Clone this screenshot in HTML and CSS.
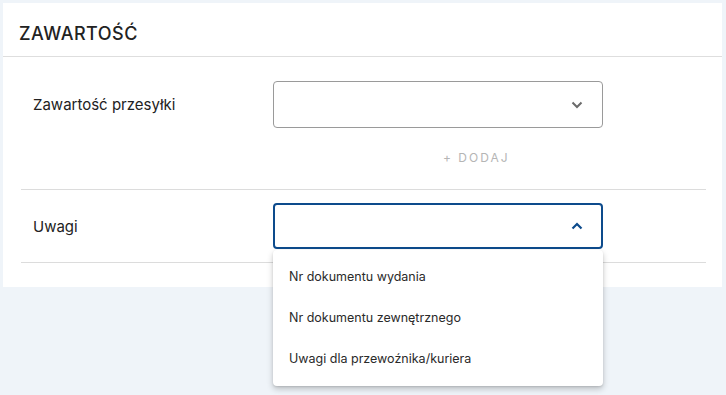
FILE: index.html
```html
<!DOCTYPE html>
<html lang="pl">
<head>
    <meta charset="UTF-8">
    <meta name="viewport" content="width=device-width, initial-scale=1.0">
    <title>Zawartość</title>
    <link rel="stylesheet" href="styles.css">
</head>
<body>
    <section class="card">
        <header class="card-header">
            <h2>Zawartość</h2>
        </header>
        <div class="card-body">
            <div class="field-row">
                <label class="field-label">Zawartość przesyłki</label>
                <div class="field-control">
                    <div class="select">
                        <svg class="chevron" width="12" height="8" viewBox="0 0 12 8"><path d="M1.5 1.5 L6 6 L10.5 1.5" fill="none" stroke="#6b6b6b" stroke-width="2"/></svg>
                    </div>
                    <button type="button" class="add-btn">+ Dodaj</button>
                </div>
            </div>
            <div class="field-row">
                <label class="field-label">Uwagi</label>
                <div class="field-control">
                    <div class="select select-open">
                        <svg class="chevron" width="12" height="8" viewBox="0 0 12 8"><path d="M1.5 6.5 L6 2 L10.5 6.5" fill="none" stroke="#0d4b8c" stroke-width="2.2"/></svg>
                    </div>
                    <ul class="menu">
                        <li>Nr dokumentu wydania</li>
                        <li>Nr dokumentu zewnętrznego</li>
                        <li>Uwagi dla przewoźnika/kuriera</li>
                    </ul>
                </div>
            </div>
        </div>
    </section>
</body>
</html>
```

FILE: styles.css
```css
body {
    margin: 0;
    padding: 3px;
    min-height: 389px;
    background-color: #eff4f9;
    font-family: Inter, "Noto Sans", sans-serif;
    color: #222;
}
.card {
    width: 719px;
    background-color: #fff;
    padding-bottom: 24px;
}
.card-header {
    height: 53px;
    border-bottom: 1px solid #dedede;
    display: flex;
    align-items: center;
    padding-left: 16px;
}
.card-header h2 {
    margin: 0;
    font-size: 18px;
    font-weight: 500;
    text-transform: uppercase;
    letter-spacing: 0.5px;
    padding-top: 8px;
}
.card-body {
    padding: 0 16px 0 18px;
}
.field-row {
    display: flex;
    border-bottom: 1px solid #dcdcdc;
    padding: 24px 0 20px 12px;
}
.field-row + .field-row {
    padding: 13px 0 13px 12px;
}
.field-label {
    width: 240px;
    font-size: 15px;
    height: 46px;
    display: flex;
    align-items: center;
}
.field-control {
    position: relative;
    width: 330px;
}
.select {
    box-sizing: border-box;
    height: 47px;
    border: 1px solid #9a9a9a;
    border-radius: 4px;
    display: flex;
    align-items: center;
    justify-content: flex-end;
    padding-right: 19px;
}
.select-open {
    height: 46px;
    border: 2px solid #0d4b8c;
    padding-right: 18px;
}
.add-btn {
    display: block;
    margin: 18px 0 0 170px;
    padding: 4px 0;
    border: none;
    background: none;
    font-family: inherit;
    font-size: 12px;
    text-transform: uppercase;
    letter-spacing: 2px;
    color: #b5b5b5;
    cursor: pointer;
}
.menu {
    position: absolute;
    top: 47px;
    left: 0;
    width: 330px;
    margin: 0;
    padding: 6px 0 7px;
    list-style: none;
    background-color: #fff;
    border-radius: 4px;
    box-shadow: 0 3px 6px rgba(0, 0, 0, 0.22), 0 1px 2px rgba(0, 0, 0, 0.1);
    z-index: 2;
}
.menu li {
    height: 41px;
    display: flex;
    align-items: center;
    padding-left: 16px;
    font-size: 12.5px;
    color: #2a2a2a;
}
```
